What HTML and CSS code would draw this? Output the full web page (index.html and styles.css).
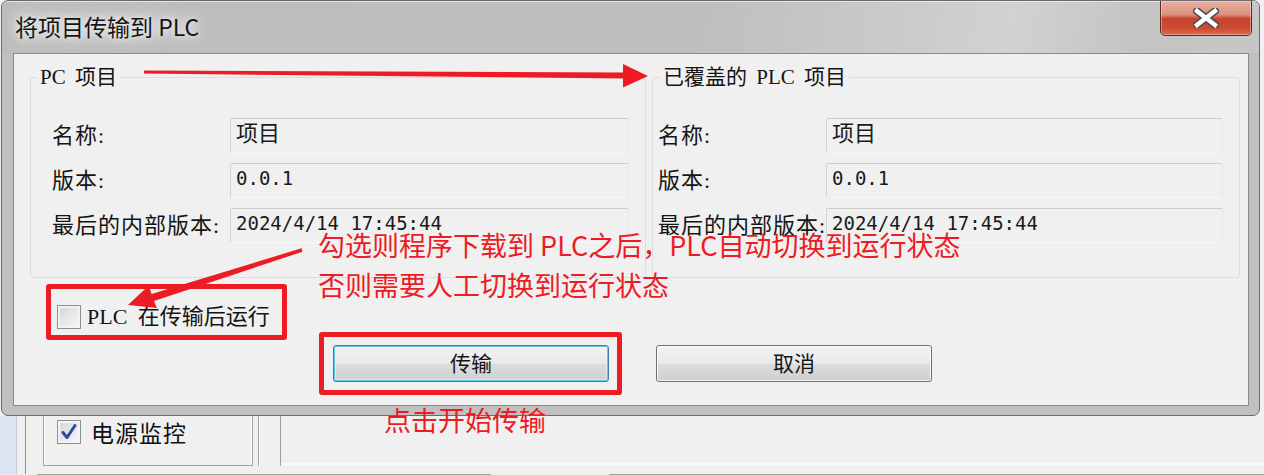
FILE: index.html
```html
<!DOCTYPE html>
<html lang="zh-CN">
<head>
<meta charset="utf-8">
<title>将项目传输到 PLC</title>
<link rel="stylesheet" href="styles.css">
</head>
<body>
<div class="page">
  <div class="window">
    <div class="titlebar">
      <span class="title">将项目传输到 PLC</span>
      <button class="close" aria-label="关闭">
        <svg width="26" height="20" viewBox="0 0 26 20">
          <path d="M4 3 L22 17 M22 3 L4 17" stroke="#4a4a4a" stroke-width="7.5" stroke-linecap="square"/>
          <path d="M4 3 L22 17 M22 3 L4 17" stroke="#ffffff" stroke-width="4.5" stroke-linecap="square"/>
        </svg>
      </button>
    </div>
    <div class="client">
      <div class="groups">
        <fieldset class="group group-pc">
          <legend>PC 项目</legend>
          <div class="rows">
            <span class="lbl">名称:</span><span class="field">项目</span>
            <span class="lbl">版本:</span><span class="field mono">0.0.1</span>
            <span class="lbl">最后的内部版本:</span><span class="field mono">2024/4/14 17:45:44</span>
          </div>
        </fieldset>
        <fieldset class="group group-plc">
          <legend>已覆盖的 PLC 项目</legend>
          <div class="rows">
            <span class="lbl">名称:</span><span class="field">项目</span>
            <span class="lbl">版本:</span><span class="field mono">0.0.1</span>
            <span class="lbl">最后的内部版本:</span><span class="field mono">2024/4/14 17:45:44</span>
          </div>
        </fieldset>
      </div>
      <label class="check-row"><span class="checkbox"></span><span class="check-label">PLC 在传输后运行</span></label>
      <div class="buttons">
        <button class="btn btn-default">传输</button>
        <button class="btn">取消</button>
      </div>
    </div>
  </div>

  <div class="behind">
    <div class="bh-top">
      <div class="bh-side"></div>
      <div class="bh-panel">
        <div class="bh-box">
          <span class="checkbox checked">
            <svg width="18" height="18" viewBox="0 0 18 18"><path d="M3 9.5 L7 14.5 L15 2.5" fill="none" stroke="#2b4a9c" stroke-width="3" stroke-linejoin="round" stroke-linecap="round"/></svg>
          </span>
          <span class="bh-label">电源监控</span>
        </div>
        <div class="bh-v"></div>
        <div class="bh-rest"></div>
      </div>
    </div>
    <div class="bh-lines"><span class="seg seg1"></span><span class="seg seg2"></span></div>
  </div>

  <div class="note note-check">勾选则程序下载到 PLC之后，PLC自动切换到运行状态<br>否则需要人工切换到运行状态</div>
  <div class="note note-start">点击开始传输</div>
  <div class="mark mark-check"></div>
  <div class="mark mark-btn"></div>
  <svg class="arrows" width="1264" height="475" viewBox="0 0 1264 475">
    <polygon points="144,70.5 623,72.5 623,64 648,76 623,87.5 623,78.5 144,73.5" fill="#ed1c24"/>
    <polygon points="301.5,248.3 151.6,294 148.8,285.5 128,305 156.8,308 154,301 302.5,251.7" fill="#ed1c24"/>
  </svg>
</div>
</body>
</html>
```

FILE: styles.css
```css
* { box-sizing: border-box; }

html, body {
  margin: 0;
  padding: 0;
}

body {
  width: 1264px;
  height: 475px;
  overflow: hidden;
  background: #f0f0f0;
  font-family: "Liberation Serif", "Noto Sans CJK SC", serif;
  color: #111;
}

.page {
  position: relative;
  width: 1264px;
  height: 475px;
}

/* ---------- dialog window ---------- */
.window {
  margin-left: 1px;
  width: 1259px;
  height: 416px;
  border: 1px solid #6b6b6b;
  border-radius: 7px;
  background: #c0c0c0;
  padding: 0 10px 9px 11px;
  display: flex;
  flex-direction: column;
  overflow: hidden;
}

.titlebar {
  height: 52px;
  margin: 0 -10px 0 -11px;
  padding: 0 9px 0 12px;
  display: flex;
  justify-content: space-between;
  align-items: flex-start;
  background: linear-gradient(100deg, #bdbdbd 0%, #bebebe 55%, #cbcbcb 72%, #d2d2d2 80%, #c4c4c4 90%, #c6c6c6 100%);
  box-shadow: inset 0 1px 0 rgba(255,255,255,0.55);
}

.title {
  font-family: "Noto Sans CJK SC", sans-serif;
  font-size: 23px;
  line-height: 50px;
  padding-left: 1px;
  color: #141414;
  text-shadow: 0 0 6px #f4f4f4, 0 0 12px #f0f0f0, 0 0 18px rgba(240,240,240,0.9);
}

.close {
  width: 92px;
  height: 36px;
  margin-top: -1px;
  margin-right: -2px;
  padding: 0;
  border: 1px solid #5a2e26;
  border-radius: 0 0 5px 5px;
  background: linear-gradient(to bottom, #e9b0a3 0%, #dd8f7e 40%, #c6452f 52%, #cf4a31 80%, #dc6a50 100%);
  box-shadow: inset 0 0 0 1px rgba(255,255,255,0.35);
  display: flex;
  align-items: center;
  justify-content: center;
}

.close svg { display: block; }

.client {
  height: 353px;
  border: 1px solid #8a8a8a;
  background: #f0f0f0;
  display: flex;
  flex-direction: column;
}

/* ---------- group boxes ---------- */
.groups {
  display: flex;
  gap: 6px;
  margin: 11px 0 0 16px;
}

.group {
  margin: 0;
  min-width: 0;
  border: 1px solid #d5dfe5;
  border-radius: 3px;
  padding-top: 29px;
  padding-bottom: 34px;
}

.group legend {
  font-size: 21px;
  line-height: 24px;
  height: 24px;
  padding: 0 3px;
  word-spacing: 4px;
  color: #141414;
}

.group-pc {
  width: 616px;
  padding-left: 21px;
  padding-right: 16px;
}
.group-pc legend { margin-left: -15px; }

.group-plc {
  width: 588px;
  padding-left: 5px;
  padding-right: 16px;
}
.group-plc legend { margin-left: 2px; }

.rows {
  display: grid;
  grid-template-rows: 35px 35px 35px;
  row-gap: 10px;
  align-items: center;
}
.group-pc .rows { grid-template-columns: 178px 1fr; }
.group-plc .rows { grid-template-columns: 168px 1fr; }

.lbl {
  font-size: 22px;
  line-height: 26px;
  letter-spacing: 1px;
  white-space: nowrap;
  color: #141414;
}

.field {
  height: 35px;
  padding: 0 5px;
  font-size: 22px;
  line-height: 29px;
  border: 1px solid;
  border-color: #cdcdcd #e6e6e6 #f6f6f6 #d2d2d2;
  border-radius: 2px;
  background: #f0f0f0;
  white-space: nowrap;
  color: #1a1a1a;
}

.field.mono {
  font-family: "DejaVu Sans Mono", monospace;
  font-size: 19px;
}

/* ---------- checkbox ---------- */
.check-row {
  margin: 27px 0 0 43px;
  display: flex;
  align-items: center;
  gap: 6px;
  height: 24px;
}

.checkbox {
  width: 24px;
  height: 24px;
  flex: none;
  border: 1px solid #8f8f8f;
  background: linear-gradient(135deg, #d4d4d4 0%, #e9e9e9 55%, #f7f7f7 100%);
  box-shadow: inset 0 0 0 2px #f3f3f3;
  display: flex;
  align-items: center;
  justify-content: center;
}

.check-label {
  font-size: 22px;
  line-height: 26px;
  word-spacing: 5px;
  color: #141414;
}

/* ---------- buttons ---------- */
.buttons {
  display: flex;
  gap: 47px;
  margin: 16px 0 0 319px;
}

.btn {
  width: 276px;
  height: 37px;
  padding: 0 0 4px;
  border: 1px solid #707070;
  border-radius: 3px;
  background: linear-gradient(to bottom, #f2f2f2 0%, #ebebeb 48%, #dddddd 52%, #cfcfcf 100%);
  box-shadow: inset 0 0 0 1px rgba(255,255,255,0.75);
  font-family: "Noto Sans CJK SC", sans-serif;
  font-size: 21px;
  line-height: 28px;
  color: #151515;
}

.btn-default {
  border-color: #3c7fb1;
  box-shadow: inset 0 0 0 1px #62c4f0, inset 0 0 0 2px rgba(255,255,255,0.4);
}

/* ---------- application behind the dialog ---------- */
.behind {
  height: 59px;
  display: flex;
  flex-direction: column;
}

.bh-top {
  height: 58px;
  display: flex;
}

.bh-side {
  width: 17px;
  background: #dbe5f1;
  border-right: 1px solid #c6d0dc;
}

.bh-panel {
  margin-left: 8px;
  flex: 1;
  display: flex;
  align-items: flex-start;
  border-left: 1px solid #8f8f8f;
}

.bh-box {
  margin-left: 17px;
  width: 210px;
  height: 50px;
  border: 1px solid #a0a0a0;
  border-top: none;
  box-shadow: inset 1px 0 0 #fff, inset -1px 0 0 #fff;
  padding: 4px 0 0 13px;
  display: flex;
  align-items: flex-start;
  gap: 10px;
}

.bh-label {
  font-family: "Noto Sans CJK SC", sans-serif;
  font-size: 23px;
  line-height: 24px;
  letter-spacing: 1px;
  color: #111;
}

.bh-v {
  margin-left: 5px;
  width: 23px;
  height: 50px;
  border-left: 1px solid #a0a0a0;
  border-right: 1px solid #a0a0a0;
  box-shadow: inset 1px 0 0 #fff;
}

.bh-rest {
  flex: 1;
  height: 49px;
  border-bottom: 2px solid #fafafa;
}

.bh-lines {
  height: 1px;
  display: flex;
}
.seg { height: 1px; background: #a3a3a3; }
.seg1 { margin-left: 37px; width: 454px; }
.seg2 { margin-left: 118px; flex: 1; }

/* ---------- red annotations (overlay) ---------- */
.note {
  position: absolute;
  font-family: "Noto Sans CJK SC", sans-serif;
  font-size: 27px;
  line-height: 40px;
  color: #ed1c24;
  white-space: nowrap;
}
.note-check { left: 318px; top: 225px; }
.note-start { left: 384px; top: 400px; }

.mark {
  position: absolute;
  border: 5px solid #ed1c24;
  border-radius: 3px;
}
.mark-check { left: 46px; top: 284px; width: 241px; height: 56px; }
.mark-btn { left: 319px; top: 332px; width: 303px; height: 63px; }

.arrows {
  position: absolute;
  left: 0;
  top: 0;
  pointer-events: none;
}
```
